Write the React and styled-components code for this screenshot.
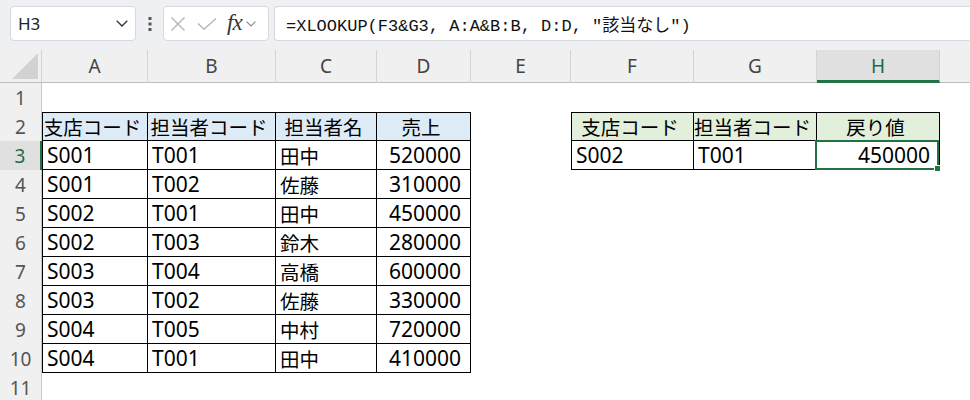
import React from 'react';
import styled, { createGlobalStyle } from 'styled-components';

const GlobalStyle = createGlobalStyle`
  html, body { margin: 0; padding: 0; background: #fff; }
  body { width: 970px; height: 400px; overflow: hidden; }
`;

const COLS = ['A', 'B', 'C', 'D', 'E', 'F', 'G', 'H', ''];
const WIDTHS = [106, 128, 101, 94, 100, 123, 123, 123, 100];

const salesHead = ['支店コード', '担当者コード', '担当者名', '売上'];
const sales = [
  ['S001', 'T001', '田中', '520000'],
  ['S001', 'T002', '佐藤', '310000'],
  ['S002', 'T001', '田中', '450000'],
  ['S002', 'T003', '鈴木', '280000'],
  ['S003', 'T004', '高橋', '600000'],
  ['S003', 'T002', '佐藤', '330000'],
  ['S004', 'T005', '中村', '720000'],
  ['S004', 'T001', '田中', '410000'],
];
const lookupHead = ['支店コード', '担当者コード', '戻り値'];
const lookupRow = ['S002', 'T001', '450000'];

const Sheet = styled.div`
  width: 970px;
  height: 400px;
  overflow: hidden;
  display: flex;
  flex-direction: column;
  background: #fff;
`;

/* ---------- formula bar ---------- */
const Toolbar = styled.div`
  height: 50px;
  flex: none;
  box-sizing: border-box;
  background: #eef0f3;
  display: flex;
  align-items: flex-start;
  padding: 6px 0 0 10px;
`;

const Box = styled.div`
  height: 35px;
  box-sizing: border-box;
  background: #fff;
  border: 1px solid #d6d8db;
  display: flex;
  align-items: center;
  flex: ${p => (p.$grow ? '1 0 auto' : 'none')};
  width: ${p => (p.$w ? `${p.$w}px` : 'auto')};
  margin-left: ${p => (p.$gap ? `${p.$gap}px` : '0')};
  border-right-color: ${p => (p.$grow ? 'transparent' : '#d6d8db')};
  border-radius: ${p => (p.$grow ? '4px 0 0 4px' : '4px')};
`;

const NameText = styled.span`
  font-family: "Noto Sans", sans-serif;
  font-size: 17px;
  color: #222;
  padding-left: 7px;
  flex: 1;
`;

const Grip = styled.div`
  width: 27px;
  height: 35px;
  flex: none;
  display: flex;
  align-items: center;
  justify-content: center;
`;

const FormulaText = styled.span`
  font-family: "Liberation Mono", "Noto Sans CJK JP", monospace;
  font-size: 17px;
  color: #111;
  padding-left: 11px;
  white-space: pre;
`;

const Fx = styled.span`
  font-family: "Liberation Serif", "DejaVu Serif", serif;
  font-style: italic;
  font-size: 23px;
  line-height: 1;
  color: #333;
  margin-left: 10px;
  letter-spacing: -1px;
  padding-bottom: 3px;
`;

/* ---------- grid ---------- */
const Grid = styled.div`
  flex: 1;
  display: grid;
  grid-template-columns: 42px ${WIDTHS.map(w => `${w}px`).join(' ')};
  grid-template-rows: 33px repeat(11, 29px);
`;

const Corner = styled.div`
  position: relative;
  background: #f0f0f0;
  border-bottom: 1px solid #bdbdbd;
  border-right: 1px solid #d4d4d4;
  box-sizing: border-box;
  &::after {
    content: '';
    position: absolute;
    right: 3px;
    bottom: 3px;
    width: 0;
    height: 0;
    border-left: 26px solid transparent;
    border-bottom: 26px solid #d2d2d2;
  }
`;

const ColHead = styled.div`
  box-sizing: border-box;
  background: ${p => (p.$active ? '#e0e0e0' : '#f0f0f0')};
  border-right: 1px solid #d4d4d4;
  border-bottom: ${p => (p.$active ? '3px solid #217346' : '1px solid #bdbdbd')};
  display: flex;
  align-items: center;
  justify-content: center;
  padding-top: ${p => (p.$active ? '2px' : '0')};
  font-family: "Noto Sans", sans-serif;
  font-size: 19px;
  color: ${p => (p.$active ? '#1e6b41' : '#444')};
`;

const RowHead = styled.div`
  box-sizing: border-box;
  background: ${p => (p.$active ? '#e0e0e0' : '#f0f0f0')};
  border-right: ${p => (p.$active ? '2px solid #217346' : '1px solid #c8c8c8')};
  display: flex;
  align-items: center;
  justify-content: center;
  font-family: "Noto Sans", sans-serif;
  font-size: 19px;
  color: ${p => (p.$active ? '#1e6b41' : '#555')};
`;

const Cell = styled.div`
  position: relative;
  box-sizing: border-box;
  background: ${p => p.$fill || 'transparent'};
  border-right: ${p => (p.$edge ? '1px solid #000' : 'none')};
  border-bottom: ${p => (p.$edge ? '1px solid #000' : 'none')};
  border-top: ${p => (p.$top ? '1px solid #000' : 'none')};
  border-left: ${p => (p.$left ? '1px solid #000' : 'none')};
  display: flex;
  align-items: center;
  justify-content: ${p => ({ left: 'flex-start', right: 'flex-end', center: 'center' }[p.$align || 'left'])};
  padding: 0 9px 0 4px;
  font-family: ${p => (p.$cjk ? '"Noto Sans CJK JP", sans-serif' : '"Noto Sans", "Noto Sans CJK JP", sans-serif')};
  font-size: ${p => (p.$cjk ? '19.5px' : '21px')};
  color: #000;
  white-space: nowrap;
`;

const Selection = styled.div`
  position: absolute;
  top: -1px;
  left: -2px;
  right: 0;
  bottom: -1px;
  border: 2px solid #217346;
  pointer-events: none;
  &::after {
    content: '';
    position: absolute;
    right: -4px;
    bottom: -4px;
    width: 5px;
    height: 5px;
    background: #217346;
    border: 1px solid #fff;
  }
`;

const Chevron = ({ size = 12, color = '#444' }) => (
  <svg width={size} height={size * 0.6} viewBox="0 0 10 6">
    <path d="M0.6 0.6 L5 5 L9.4 0.6" fill="none" stroke={color} strokeWidth="1.1" />
  </svg>
);

function FormulaBar() {
  return (
    <Toolbar>
      <Box $w={126}>
        <NameText>H3</NameText>
        <span style={{ marginRight: 7, display: 'flex' }}>
          <Chevron size={12} color="#333" />
        </span>
      </Box>
      <Grip>
        <svg width="4" height="14" viewBox="0 0 4 14">
          <rect x="0.5" y="0" width="3" height="3" fill="#555" />
          <rect x="0.5" y="5.5" width="3" height="3" fill="#555" />
          <rect x="0.5" y="11" width="3" height="3" fill="#555" />
        </svg>
      </Grip>
      <Box $w={106}>
        <svg width="16" height="14" viewBox="0 0 16 14" style={{ marginLeft: 6 }}>
          <path d="M1.5 0.5 L14.5 13.5 M14.5 0.5 L1.5 13.5" stroke="#b4b4b4" strokeWidth="1.3" fill="none" />
        </svg>
        <svg width="20" height="12" viewBox="0 0 20 12" style={{ marginLeft: 11 }}>
          <path d="M1 5.5 L7 11.3 L19 0.5" stroke="#b4b4b4" strokeWidth="1.3" fill="none" />
        </svg>
        <Fx>fx</Fx>
        <span style={{ marginLeft: 4, display: 'flex' }}>
          <Chevron size={10} color="#888" />
        </span>
      </Box>
      <Box $grow $gap={5}>
        <FormulaText>=XLOOKUP(F3&amp;G3, A:A&amp;B:B, D:D, "該当なし")</FormulaText>
      </Box>
    </Toolbar>
  );
}

// what sits in one sheet cell: text, alignment, fill and which borders it draws
function cellAt(row, col) {
  const blue = '#ddebf7';
  const green = '#e2efda';
  if (col <= 3 && row >= 2 && row <= 10) {
    const head = row === 2;
    const text = head ? salesHead[col] : sales[row - 3][col];
    return {
      text,
      cjk: head || col === 2,
      align: head ? 'center' : col === 3 ? 'right' : 'left',
      fill: head ? blue : null,
      edge: true,
      top: head,
      left: col === 0,
    };
  }
  if (col >= 5 && col <= 7 && row >= 2 && row <= 3) {
    const i = col - 5;
    const head = row === 2;
    return {
      text: head ? lookupHead[i] : lookupRow[i],
      cjk: head,
      align: head ? 'center' : i === 2 ? 'right' : 'left',
      fill: head ? green : null,
      edge: true,
      top: head,
      left: i === 0,
      selected: !head && i === 2,
    };
  }
  return { text: '' };
}

export default function App() {
  const rows = Array.from({ length: 11 }, (_, i) => i + 1);
  return (
    <Sheet>
      <GlobalStyle />
      <FormulaBar />
      <Grid>
        <Corner />
        {COLS.map((c, ci) => (
          <ColHead key={ci} $active={c === 'H'}>{c}</ColHead>
        ))}
        {rows.map(r => (
          <React.Fragment key={r}>
            <RowHead $active={r === 3}>{r}</RowHead>
            {COLS.map((c, ci) => {
              const cell = cellAt(r, ci);
              return (
                <Cell
                  key={ci}
                  $align={cell.align}
                  $fill={cell.fill}
                  $cjk={cell.cjk}
                  $edge={cell.edge}
                  $top={cell.top}
                  $left={cell.left}
                >
                  {cell.text}
                  {cell.selected && <Selection />}
                </Cell>
              );
            })}
          </React.Fragment>
        ))}
      </Grid>
    </Sheet>
  );
}
